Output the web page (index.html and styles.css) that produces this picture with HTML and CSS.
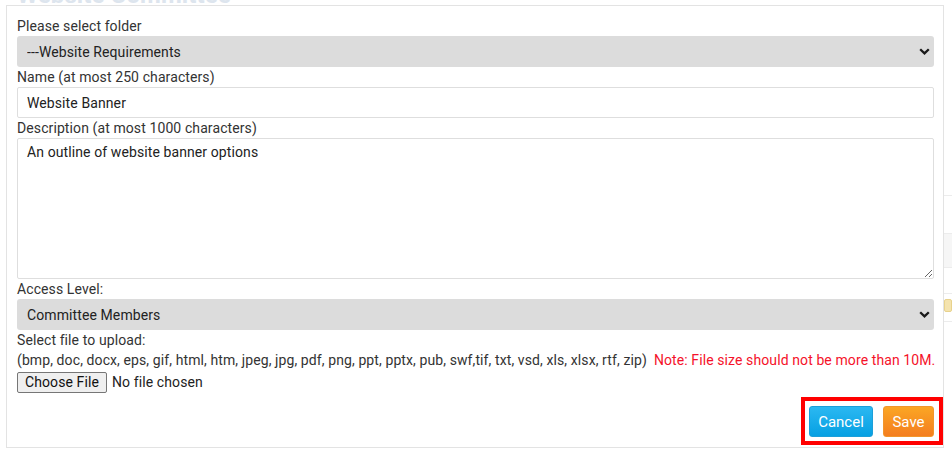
FILE: index.html
```html
<!DOCTYPE html>
<html lang="en">
<head>
<meta charset="utf-8">
<title>Add Document</title>
<link rel="stylesheet" href="styles.css">
</head>
<body>
<div class="page">
  <h1 class="page-title">Website Committee</h1>
  <div class="bg-table">
    <div class="bg-row bg-head"></div>
    <div class="bg-row bg-band"></div>
    <div class="bg-row bg-plain"></div>
    <div class="bg-row bg-item"><span class="bg-icon"></span></div>
  </div>
</div>

<div class="modal">
  <form class="doc-form">
    <label class="field-label" for="folder">Please select folder</label>
    <div class="select-wrap">
      <select id="folder" class="control select">
        <option>---Website Requirements</option>
      </select>
      <svg class="chevron" width="11" height="7" viewBox="0 0 11 7"><polyline points="1.2,1.2 5.5,5.4 9.8,1.2" fill="none" stroke="#1a1a1a" stroke-width="2.3"/></svg>
    </div>

    <label class="field-label" for="name">Name (at most 250 characters)</label>
    <input id="name" class="control input" type="text" value="Website Banner">

    <label class="field-label" for="desc">Description (at most 1000 characters)</label>
    <textarea id="desc" class="control textarea">An outline of website banner options</textarea>

    <label class="field-label" for="access">Access Level:</label>
    <div class="select-wrap">
      <select id="access" class="control select">
        <option>Committee Members</option>
      </select>
      <svg class="chevron" width="11" height="7" viewBox="0 0 11 7"><polyline points="1.2,1.2 5.5,5.4 9.8,1.2" fill="none" stroke="#1a1a1a" stroke-width="2.3"/></svg>
    </div>

    <label class="field-label" for="file">Select file to upload:</label>
    <div class="file-types">(bmp, doc, docx, eps, gif, html, htm, jpeg, jpg, pdf, png, ppt, pptx, pub, swf,tif, txt, vsd, xls, xlsx, rtf, zip)<span class="note">Note: File size should not be more than 10M.</span></div>
    <div class="file-row">
      <span class="file-btn">Choose File</span>
      <span class="file-status">No file chosen</span>
    </div>

    <div class="form-footer">
      <div class="action-group">
        <button type="button" class="btn btn-cancel">Cancel</button>
        <button type="button" class="btn btn-save">Save</button>
      </div>
    </div>
  </form>
</div>
</body>
</html>
```

FILE: styles.css
```css
html, body {
  margin: 0;
  padding: 0;
  background: #fff;
  font-family: Roboto, "Liberation Sans", Arial, sans-serif;
  font-size: 14px;
  letter-spacing: 0.1px;
  color: #333;
  overflow: hidden;
}

.page {
  padding-left: 17px;
  height: 455px;
}

.page-title {
  margin: -17px 0 0 0;
  height: 22px;
  line-height: 24px;
  font-size: 24px;
  font-weight: 700;
  color: #dde5ee;
}

.bg-table {
  margin-top: 190px;
}

.bg-row {
  border-top: 1px solid #ececec;
}

.bg-head { height: 37px; }
.bg-band { height: 33px; background: #f6f6f6; }
.bg-plain { height: 25px; }
.bg-item {
  height: 29px;
  border-bottom: 1px solid #ececec;
  display: flex;
  justify-content: flex-end;
  padding-top: 5px;
  box-sizing: border-box;
}

.bg-icon {
  width: 6px;
  height: 11px;
  background: #f4e3ae;
  border: 1px solid #e8d28c;
  border-radius: 2px;
}

.modal {
  position: absolute;
  left: 6px;
  top: 5px;
  width: 938px;
  height: 443px;
  box-sizing: border-box;
  background: #fff;
  border: 1px solid #e3e3e3;
  padding: 10px 9px 0 10px;
}

.doc-form {
  display: flex;
  flex-direction: column;
}

.field-label {
  display: block;
  line-height: 20px;
  height: 20px;
  color: #333;
}

.control {
  box-sizing: border-box;
  width: 100%;
  font-family: inherit;
  font-size: 14px;
  letter-spacing: 0.1px;
  color: #222;
  margin: 0;
  outline: none;
}

.select-wrap {
  position: relative;
}

.select {
  appearance: none;
  -webkit-appearance: none;
  height: 31px;
  border: none;
  border-radius: 3px;
  background: #dcdcdc;
  padding: 0 10px;
  display: block;
}

.chevron {
  position: absolute;
  right: 4px;
  top: 12px;
  pointer-events: none;
}

.input {
  height: 31px;
  border: 1px solid #dedede;
  border-radius: 2px;
  padding: 0 9px;
  display: block;
}

.textarea {
  height: 141px;
  border: 1px solid #dedede;
  border-radius: 2px;
  padding: 3px 9px;
  line-height: 20px;
  resize: vertical;
  display: block;
}

.file-types {
  line-height: 20px;
  height: 20px;
  color: #333;
  white-space: nowrap;
}

.note {
  color: #f5122a;
  margin-left: 7px;
}

.file-row {
  display: flex;
  align-items: center;
  height: 22px;
  margin-top: 1px;
  gap: 5px;
}

.file-btn {
  box-sizing: border-box;
  height: 21px;
  line-height: 19px;
  padding: 0 7px;
  border: 1px solid #767676;
  border-radius: 2px;
  background: #efefef;
  color: #111;
  font-size: 14px;
}

.file-status {
  color: #222;
  font-size: 14px;
}

.form-footer {
  display: flex;
  justify-content: flex-end;
  margin-top: 4px;
  margin-right: -9px;
}

.action-group {
  display: flex;
  gap: 10px;
  border: 4px solid #ff0000;
  padding: 5px 5px 4px 4px;
}

.btn {
  height: 31px;
  border-radius: 3px;
  color: #fff;
  font-family: inherit;
  font-size: 15px;
  padding: 0;
  cursor: pointer;
}

.btn-cancel {
  width: 64px;
  background: linear-gradient(#2bb8f1, #06a0e3);
  border: 1px solid #1c9fd9;
}

.btn-save {
  width: 51px;
  background: linear-gradient(#fba624, #f47e1f);
  border: 1px solid #f2962c;
}
```
